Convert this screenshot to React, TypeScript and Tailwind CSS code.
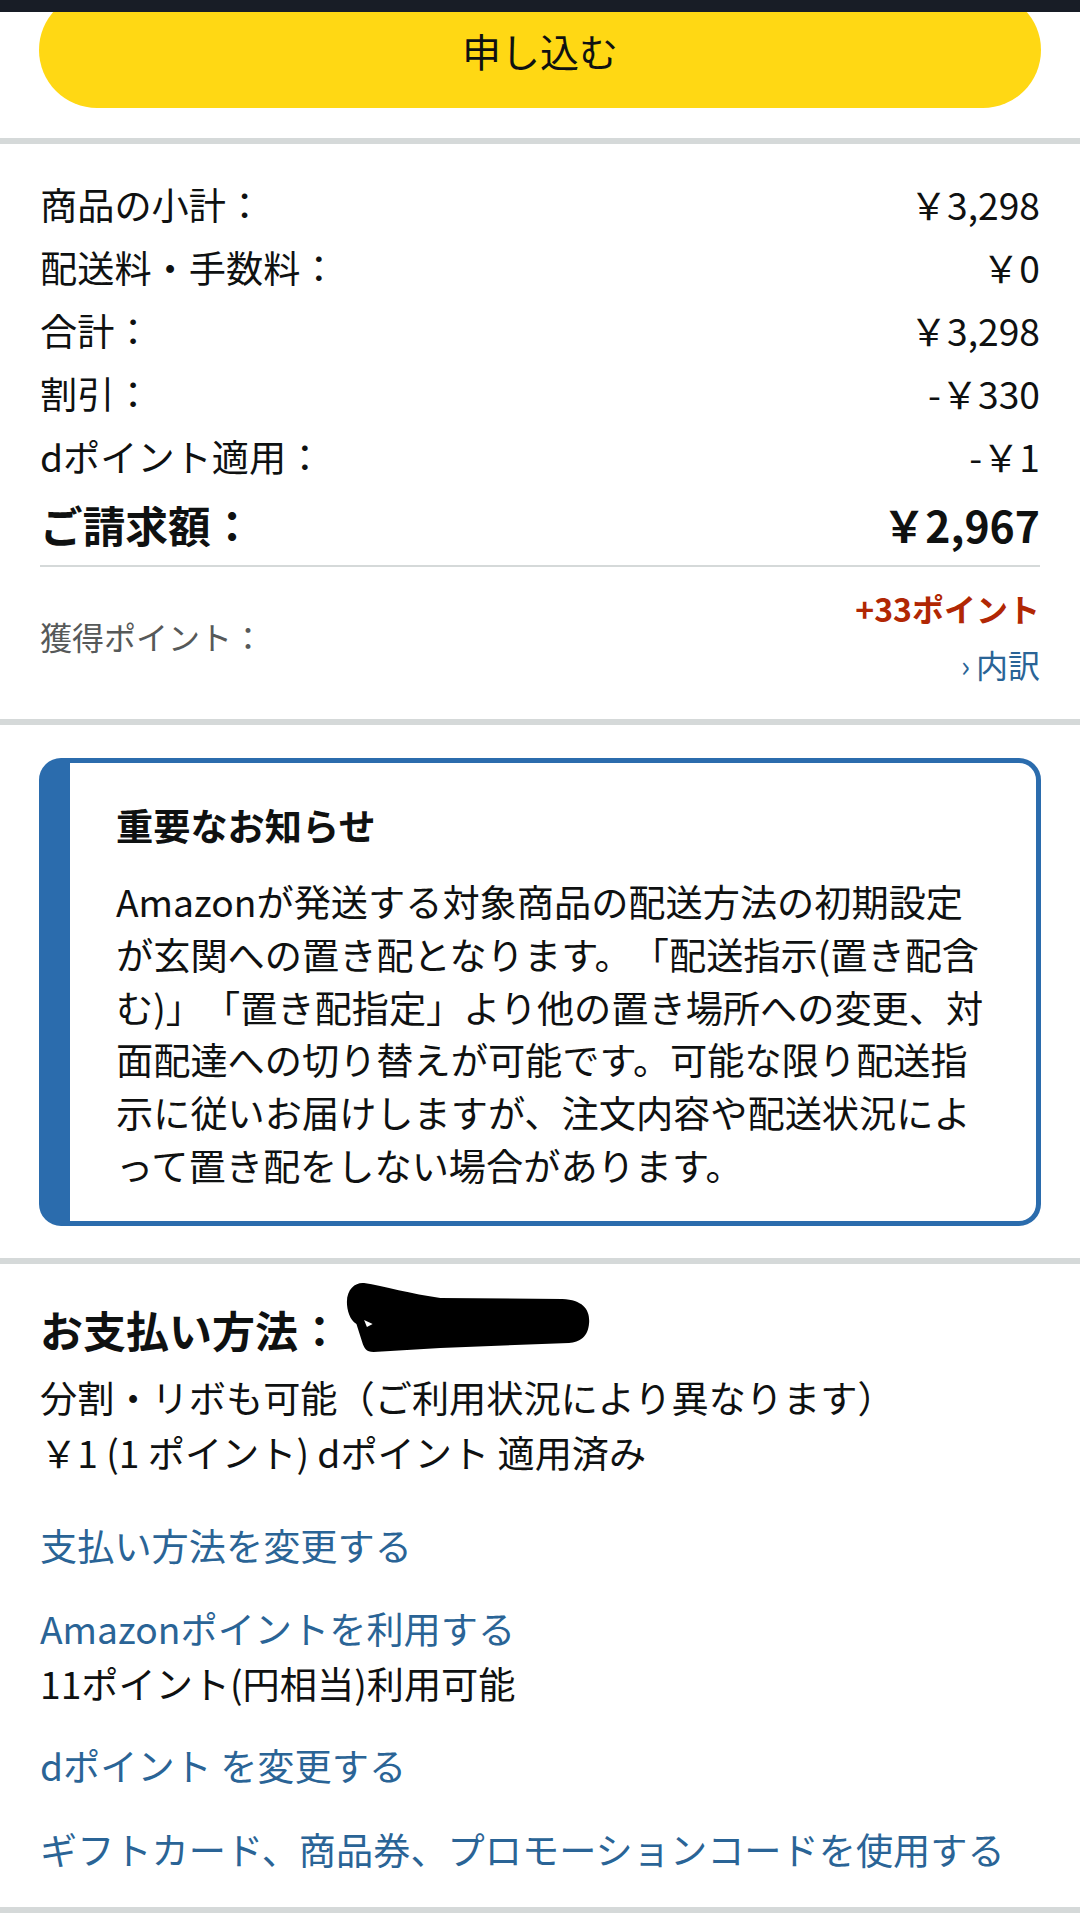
import React from "react";

const Row = ({ label, value }: { label: string; value: string }) => (
  <div className="flex h-[63px] items-center justify-between">
    <span>{label}</span>
    <span>{value}</span>
  </div>
);

export default function App() {
  const body = [
    "Amazonが発送する対象商品の配送方法の初期設定",
    "が玄関への置き配となります。「配送指示(置き配含",
    "む)」「置き配指定」より他の置き場所への変更、対",
    "面配達への切り替えが可能です。可能な限り配送指",
    "示に従いお届けしますが、注文内容や配送状況によ",
    "って置き配をしない場合があります。",
  ];
  return (
    <div className="w-[1080px] min-h-[1917px] bg-white text-[#0f1111] font-['Noto_Sans_CJK_JP','Noto_Sans',sans-serif] text-[37.2px] [text-spacing-trim:space-all]">
      {/* Button area */}
      <div className="relative h-[138px] overflow-hidden px-[39px]">
        <div className="absolute left-0 right-0 top-0 h-[12px] bg-[#181d26]" />
        <div className="mt-[-8px] flex h-[116px] items-center justify-center rounded-full bg-[#ffd814] text-[39px]">
          申し込む
        </div>
      </div>
      <div className="h-[6px] bg-[#d5d9d9]" />

      {/* Summary */}
      <div className="px-[40px] pt-[29px]">
        <Row label="商品の小計：" value="￥3,298" />
        <Row label="配送料・手数料：" value="￥0" />
        <Row label="合計：" value="￥3,298" />
        <Row label="割引：" value="-￥330" />
        <Row label="dポイント適用：" value="-￥1" />
        <div className="flex h-[72px] items-center justify-between text-[42.7px] font-bold">
          <span>ご請求額：</span>
          <span>￥2,967</span>
        </div>
        <div className="mt-[5px] h-[2px] bg-[#d5d9d9]" />
        <div className="flex items-center justify-between pb-[27px] pt-[13px]">
          <span className="text-[32px] text-[#565959]">獲得ポイント：</span>
          <div className="flex flex-col items-end">
            <span className="flex h-[56px] items-center text-[32px] font-bold text-[#b12704]">+33ポイント</span>
            <span className="flex h-[56px] items-center text-[32px] text-[#2a6496]">
              <span className="mr-[6px] text-[30px]">›</span>内訳
            </span>
          </div>
        </div>
      </div>
      <div className="h-[6px] bg-[#d5d9d9]" />

      {/* Notice */}
      <div className="px-[39px] pb-[32px] pt-[33px]">
        <div className="rounded-[22px] border-[5px] border-l-[31px] border-[#2b6cad] pb-[29px] pl-[46px] pr-[10px] pt-[37px]">
          <div className="flex h-[52px] items-center font-bold">重要なお知らせ</div>
          <div className="mt-[23px] leading-[52.8px]">
            {body.map((l, i) => (
              <div key={i} className="whitespace-nowrap">
                {l}
              </div>
            ))}
          </div>
        </div>
      </div>
      <div className="h-[6px] bg-[#d5d9d9]" />

      {/* Payment */}
      <div className="px-[40px] pb-[30px] pt-[38px] leading-[55px]">
        <div className="flex h-[56px] items-center">
          <span className="text-[43px] font-bold">お支払い方法：</span>
          <svg
            className="ml-[4px] mt-[-26px] shrink-0"
            width="246"
            height="74"
            viewBox="0 0 258 74"
            preserveAspectRatio="none"
          >
            <path
              d="M2,22 C2,8 12,2 20,3 C40,6 70,14 100,18 L228,19 C250,20 257,30 256,43 C255,57 246,62 235,63 L100,68 L30,72 C22,72 20,68 18,62 L12,44 C5,40 2,30 2,22 Z"
              fill="#000"
            />
            <path d="M20,40 L29,44 L23,47 Z" fill="#fff" />
          </svg>
        </div>
        <div className="mt-[12px]">分割・リボも可能（ご利用状況により異なります）</div>
        <div>￥1 (1 ポイント) dポイント 適用済み</div>
        <div className="mt-[38px] text-[#2a6496]">支払い方法を変更する</div>
        <div className="mt-[28px] text-[#2a6496]">Amazonポイントを利用する</div>
        <div>11ポイント(円相当)利用可能</div>
        <div className="mt-[27px] text-[#2a6496]">dポイント を変更する</div>
        <div className="mt-[29px] text-[#2a6496]">ギフトカード、商品券、プロモーションコードを使用する</div>
      </div>
      <div className="h-[6px] bg-[#d5d9d9]" />
    </div>
  );
}
